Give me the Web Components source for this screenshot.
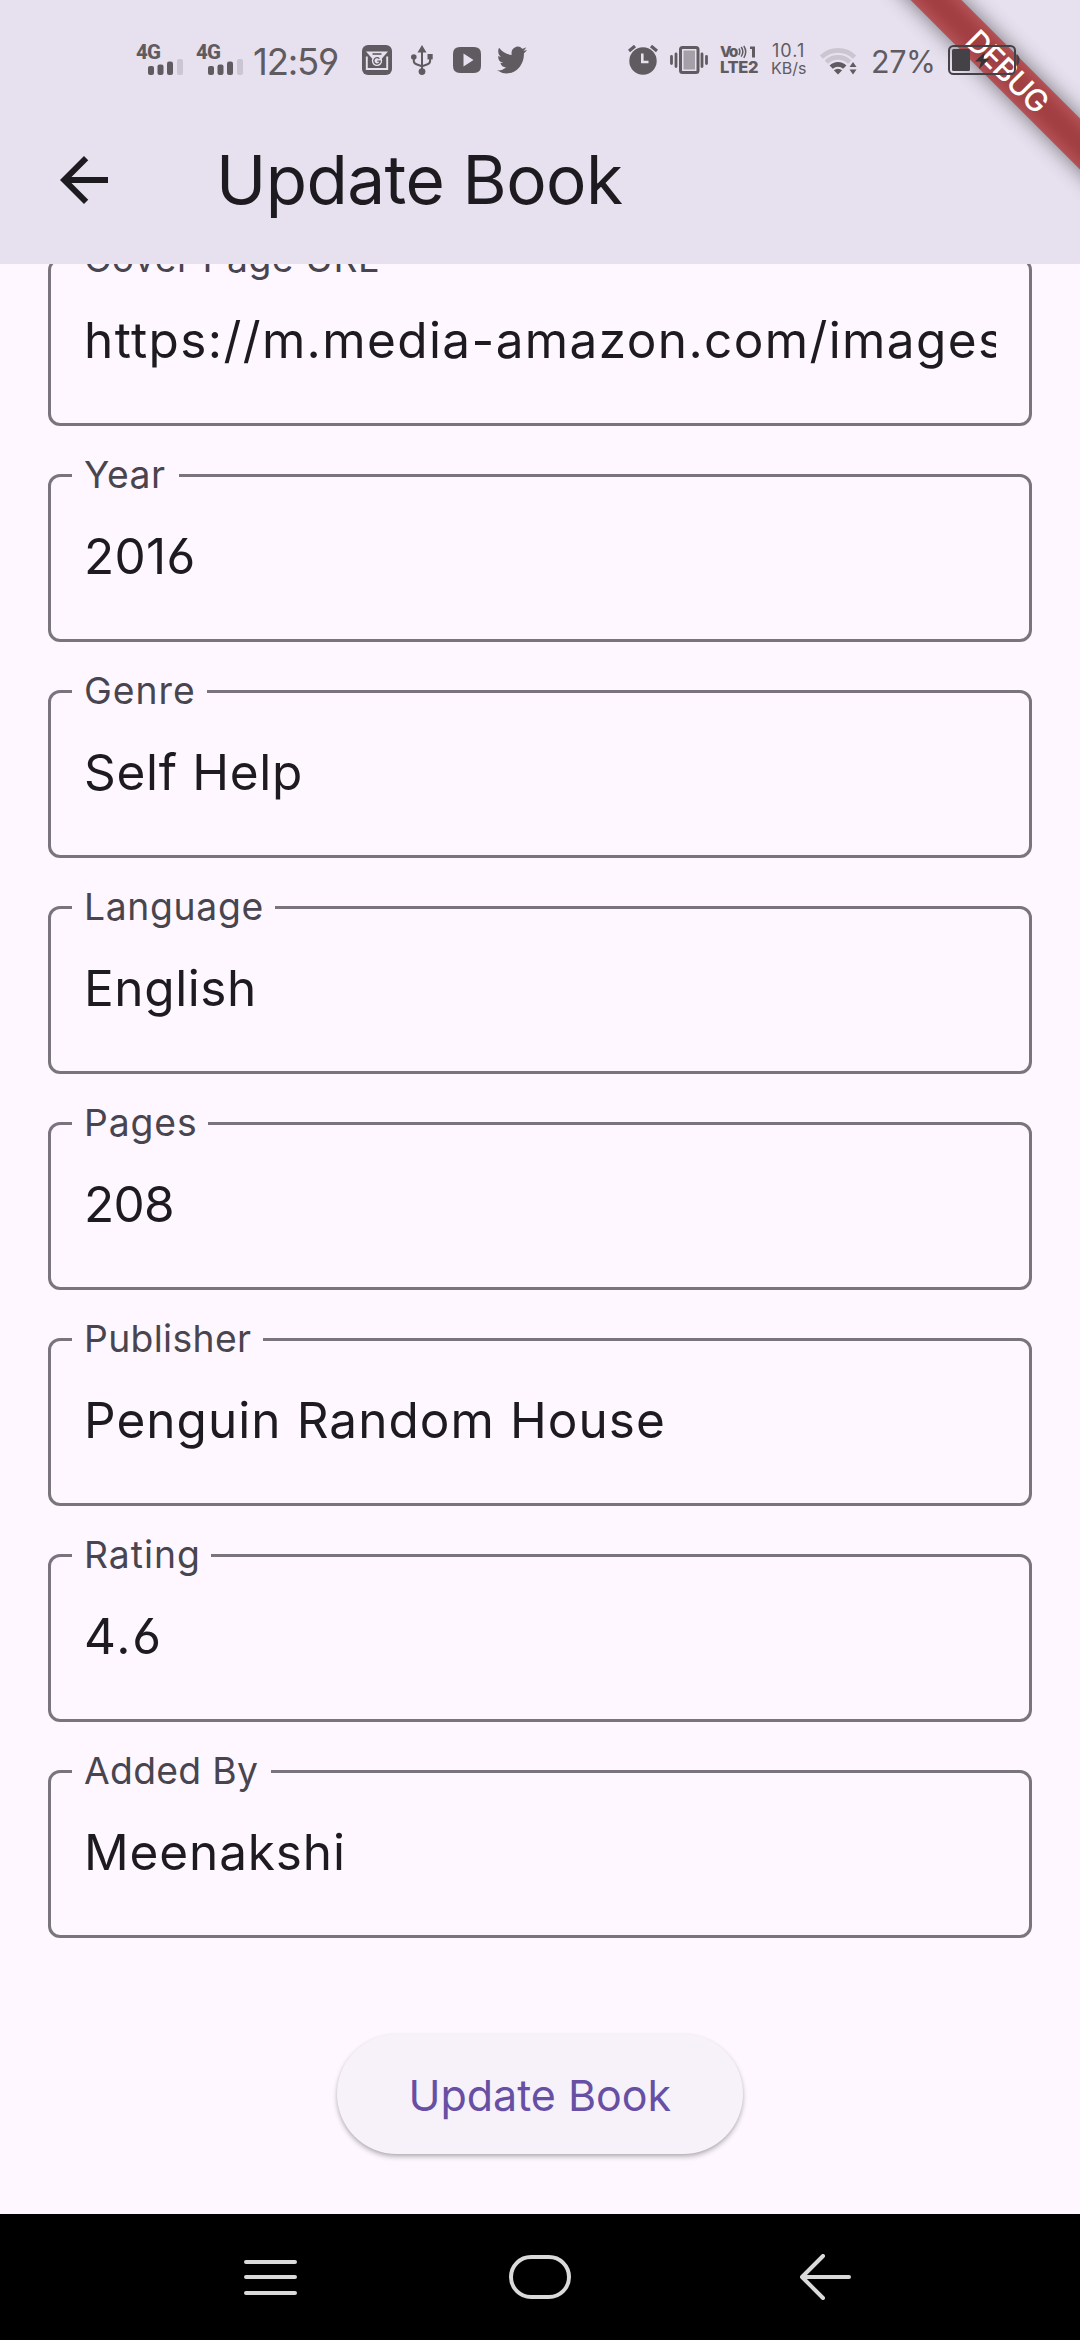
<!DOCTYPE html>
<html lang="en">
<head>
<meta charset="utf-8">
<title>Update Book</title>
<style>
  html, body { margin: 0; padding: 0; background: #fef7ff; }
  body { font-family: Inter, "Liberation Sans", sans-serif; color: #1d1b20; }
</style>
</head>
<body>
<book-app></book-app>
<script>
const define = (name, html, setup) => {
  const template = document.createElement('template');
  template.innerHTML = html;
  customElements.define(name, class extends HTMLElement {
    connectedCallback() {
      if (this.shadowRoot) return;
      this.attachShadow({ mode: 'open' }).append(template.content.cloneNode(true));
      if (setup) setup(this, this.shadowRoot);
    }
  });
};

/* Spaces its letters so that the painted text is `w` pixels wide. With `flush`, the ink starts at the left edge of the box. */
define('fit-text', `<style>
  :host { display: block; white-space: pre; }
  span { display: inline-block; font-feature-settings: "cv03", "cv04"; }
</style><span></span>`, (host, root) => {
  const span = root.querySelector('span');
  const text = host.getAttribute('text');
  span.textContent = text;
  const style = getComputedStyle(host);
  const ctx = document.createElement('canvas').getContext('2d');
  ctx.font = style.fontWeight + ' ' + style.fontSize + ' ' + style.fontFamily;
  const m = ctx.measureText(text);
  const w = Number(host.getAttribute('w'));
  const ink = m.actualBoundingBoxRight + m.actualBoundingBoxLeft;
  span.style.letterSpacing = ((w - ink) / Math.max(1, text.length - 1)).toFixed(3) + 'px';
  if (host.hasAttribute('flush')) {
    host.style.width = w + 'px';
    span.style.marginLeft = m.actualBoundingBoxLeft + 'px';
  }
});

define('signal-meter', `<style>
  :host { display: flex; flex-direction: column; width: 48px; height: 30px; }
  fit-text { font-family: Roboto, sans-serif; font-size: 20.5px; font-weight: 800; line-height: 14px; height: 14px; }
  svg { display: block; margin-left: 12px; }
</style>
<fit-text text="4G" w="24" flush></fit-text>
<svg width="36" height="16" viewBox="0 0 36 16">
  <rect x="0" y="7" width="6" height="9" rx="2" fill="#5f5b61"/>
  <rect x="9.5" y="5.5" width="6" height="10.5" rx="2" fill="#5f5b61"/>
  <rect x="19" y="2.5" width="6" height="13.5" rx="2" fill="#5f5b61"/>
  <rect x="29" y="0" width="6" height="16" rx="2" fill="#cbc5d1"/>
</svg>`);

define('status-bar', `<style>
  :host { display: flex; position: relative; z-index: 1; box-sizing: border-box; height: 96px; padding: 24px 0 0 136px; align-items: center; color: #5f5b61; }
  svg { display: block; flex: none; fill: #5f5b61; }
  fit-text, signal-meter { flex: none; }
  .time { font-size: 36.5px; font-weight: 400; line-height: 44px; margin: 4px 0 0 10px; }
  .stack { display: flex; flex-direction: column; flex: none; }
  .lte { margin-left: 12px; gap: 1px; font-weight: 800; }
  .lte .row { display: flex; align-items: center; height: 14px; }
  .rate { margin-left: 14px; }
  .pct { font-size: 30.5px; font-weight: 400; line-height: 36px; margin: 3px 0 0 16px; }
</style>
<signal-meter></signal-meter>
<signal-meter style="margin-left:12px"></signal-meter>
<fit-text class="time" text="12:59" w="85" flush></fit-text>

<svg style="margin-left:23px" width="30" height="30" viewBox="0 0 30 30">
  <rect width="30" height="30" rx="6"/>
  <path d="M4 6.5H26L19 14.5H11Z" fill="#e7e1ef"/>
  <path d="M4.8 11.5V24H25.2V11.5" fill="none" stroke="#e7e1ef" stroke-width="1.9"/>
  <path d="M10.5 9H19.5" stroke="#5f5b61" stroke-width="1.6"/>
  <circle cx="15" cy="15.8" r="5.2" fill="#e7e1ef"/>
  <path d="M17.4 13.7A3.2 3.2 0 1 0 18.2 16.2H15.2" fill="none" stroke="#5f5b61" stroke-width="1.3"/>
</svg>
<svg style="margin-left:19px" width="22" height="30" viewBox="0 0 22 30">
  <path d="M11 0L15.5 7.5H6.5Z"/>
  <circle cx="11" cy="26.6" r="3.4"/>
  <circle cx="2.8" cy="12" r="2.8"/>
  <rect x="16.5" y="9" width="5.2" height="5.4"/>
  <path d="M11 6V26M2.8 12V16Q2.8 18.5 6 19.5L11 21.3M19.1 13V16Q19.1 18.5 16 19.5L11 21.3" fill="none" stroke="#5f5b61" stroke-width="2"/>
</svg>
<svg style="margin-left:20px" width="28" height="26" viewBox="0 0 28 26">
  <path fill-rule="evenodd" d="M7 0H21Q28 0 28 7V19Q28 26 21 26H7Q0 26 0 19V7Q0 0 7 0ZM10.5 6.5V19.5L20.5 13Z"/>
</svg>
<svg style="margin-left:16px" width="30" height="28" viewBox="0 1.8 24 20.4" preserveAspectRatio="none">
  <path d="M23.953 4.57a10 10 0 01-2.825.775 4.958 4.958 0 002.163-2.723c-.951.555-2.005.959-3.127 1.184a4.92 4.92 0 00-8.384 4.482C7.69 8.095 4.067 6.13 1.64 3.162a4.822 4.822 0 00-.666 2.475c0 1.71.87 3.213 2.188 4.096a4.904 4.904 0 01-2.228-.616v.06a4.923 4.923 0 003.946 4.827 4.996 4.996 0 01-2.212.085 4.936 4.936 0 004.604 3.417 9.867 9.867 0 01-6.102 2.105c-.39 0-.779-.023-1.17-.067a13.995 13.995 0 007.557 2.209c9.053 0 13.998-7.496 13.998-13.985 0-.21 0-.42-.015-.63A9.935 9.935 0 0024 4.59z"/>
</svg>

<svg style="margin-left:101px" width="30" height="30" viewBox="0 0 30 30">
  <circle cx="15" cy="16" r="13.7"/>
  <path d="M1 6L7 1M29 6L23 1" stroke="#5f5b61" stroke-width="3.2"/>
  <path d="M14.3 8.5V17H20.5" fill="none" stroke="#e7e1ef" stroke-width="2.6"/>
</svg>
<svg style="margin-left:12px" width="38" height="28" viewBox="0 0 38 28">
  <rect x="10.5" y="1.5" width="17.5" height="25" rx="2" fill="#e7e1ef" stroke="#5f5b61" stroke-width="3"/>
  <rect x="13.5" y="4.5" width="11.5" height="19" fill="#a49fa8"/>
  <path d="M1.5 10.5V17.5M6 8V20.5M32 8V20.5M36.5 10.5V17.5" stroke="#5f5b61" stroke-width="2.8" stroke-linecap="round"/>
</svg>
<div class="stack lte">
  <div class="row">
    <fit-text text="Vo" w="18" flush style="font-size:15px;line-height:14px"></fit-text>
    <svg width="20" height="14" viewBox="0 0 20 14">
      <path d="M.8 3.5Q3 6.5 .8 10M3.2 2Q6.4 6.5 3.2 11.6M5.8 1Q9.6 6.5 5.8 12.8" fill="none" stroke="#5f5b61" stroke-width="1.5"/>
      <path d="M12 1.5H17V12.5H14V4H12Z"/>
    </svg>
  </div>
  <fit-text text="LTE2" w="38" flush style="font-size:16.5px;line-height:15px"></fit-text>
</div>
<div class="stack rate">
  <fit-text text="10.1" w="31" flush style="font-size:18px;line-height:16px"></fit-text>
  <fit-text text="KB/s" w="34" flush style="font-size:16px;line-height:18px"></fit-text>
</div>
<svg style="margin-left:14px" width="37" height="29" viewBox="0 0 37 29">
  <g fill="none" stroke-width="4.6">
    <path d="M1.4 11.2A23.6 23.6 0 0 1 34.6 11.2" stroke="#cbc5d1"/>
    <path d="M6.3 16.2A16.6 16.6 0 0 1 29.7 16.2" stroke="#cbc5d1"/>
    <path d="M11.2 21.2A9.6 9.6 0 0 1 24.8 21.2" stroke="#5f5b61"/>
  </g>
  <path d="M18 28.5L13.8 24.3Q18 21.3 22.2 24.3Z"/>
  <path d="M29.5 21L33 16L36.5 21ZM29.5 23.5L33 28.5L36.5 23.5Z"/>
</svg>
<fit-text class="pct" text="27%" w="60" flush></fit-text>
<svg style="margin-left:15px" width="72" height="30" viewBox="0 0 72 30">
  <rect x="1" y="1" width="66" height="28" rx="4.5" fill="none" stroke="#444246" stroke-width="2"/>
  <rect x="4" y="4" width="18" height="22" rx="1.5" fill="#444246"/>
  <path d="M37 7L27 16.5H33L31 24L41.5 13.8H35.5Z" fill="#353337"/>
  <path d="M68.5 9Q71.5 10.5 71.5 15T68.5 21Z" fill="#444246"/>
</svg>`);

define('debug-ribbon', `<style>
  :host { display: block; position: absolute; left: 858px; top: 54px; width: 300px; height: 36px; transform: rotate(45deg); }
  .shade { position: absolute; inset: 0; background: rgba(0,0,0,.5); filter: blur(10.5px); }
  .band { position: absolute; inset: 0; display: flex; align-items: center; justify-content: center; background: rgba(183,28,28,.627); color: #fff; font-size: 30.6px; font-weight: 500; line-height: 36px; }
</style>
<div class="shade"></div>
<div class="band"><fit-text text="DEBUG" w="100" flush></fit-text></div>`);

define('app-header', `<style>
  :host { display: block; position: relative; overflow: hidden; height: 264px; background: #e7e1ef; }
  .bar { display: flex; align-items: center; height: 168px; padding-left: 48px; box-sizing: border-box; }
  svg { display: block; fill: #1d1b20; }
  fit-text { font-size: 67.5px; line-height: 80px; font-weight: 380; margin: -1px 0 0 101px; }
</style>
<debug-ribbon></debug-ribbon>
<status-bar></status-bar>
<div class="bar">
  <svg width="72" height="72" viewBox="0 0 24 24"><path d="M20 11H7.83l5.59-5.59L12 4l-8 8 8 8 1.41-1.41L7.83 13H20z"/></svg>
  <fit-text text="Update Book" w="402" flush></fit-text>
</div>`);

define('outlined-field', `<style>
  :host { display: block; }
  fieldset { box-sizing: border-box; margin: 0; padding: 0 33px; height: 188px; min-width: 0; border: 3px solid #79747e; border-radius: 12px; }
  legend { box-sizing: border-box; margin-left: -12px; padding: 0 12px; height: 43px; color: #49454f; font-size: 37.3px; font-weight: 380; line-height: 41px; }
  .value { overflow: hidden; padding-top: 30px; font-size: 49.5px; font-weight: 380; line-height: 58px; height: 64px; }
</style>
<fieldset><legend></legend><div class="value"></div></fieldset>`, (host, root) => {
  const make = (text, w) => {
    const el = document.createElement('fit-text');
    el.setAttribute('text', text);
    el.setAttribute('w', w);
    return el;
  };
  const legend = root.querySelector('legend');
  legend.style.width = host.getAttribute('notch') + 'px';
  legend.append(make(host.getAttribute('label'), host.getAttribute('lw')));
  root.querySelector('.value').append(make(host.getAttribute('value'), host.getAttribute('vw')));
});

define('raised-button', `<style>
  :host { display: flex; align-items: center; justify-content: center; width: 406px; height: 120px; border-radius: 60px; background: #f7f2fa; color: #6750a4; font-size: 43px; font-weight: 380; line-height: 52px; box-shadow: 0 3px 5px rgba(0,0,0,.25), 0 1px 3px rgba(0,0,0,.08); }
  fit-text { margin: 2px 0 0 2px; }
</style><fit-text text="Update Book" w="259" flush></fit-text>`);

define('book-form', `<style>
  :host { display: flex; flex-direction: column; flex: 1; min-height: 0; overflow: hidden; background: #fef7ff; }
  .fields { display: flex; flex-direction: column; gap: 28px; margin-top: -26px; padding: 0 48px; }
  raised-button { margin: 96px auto 0; }
</style>
<div class="fields">
  <outlined-field label="Cover Page URL" lw="292" notch="320" value="https://m.media-amazon.com/images" vw="915"></outlined-field>
  <outlined-field label="Year" lw="81" notch="107" value="2016" vw="107.5"></outlined-field>
  <outlined-field label="Genre" lw="107" notch="135" value="Self Help" vw="214"></outlined-field>
  <outlined-field label="Language" lw="174.5" notch="203" value="English" vw="165"></outlined-field>
  <outlined-field label="Pages" lw="108" notch="136" value="208" vw="85"></outlined-field>
  <outlined-field label="Publisher" lw="164" notch="191" value="Penguin Random House" vw="575"></outlined-field>
  <outlined-field label="Rating" lw="110" notch="139" value="4.6" vw="73"></outlined-field>
  <outlined-field label="Added By" lw="173" notch="198.5" value="Meenakshi" vw="255"></outlined-field>
</div>
<raised-button></raised-button>`);

define('system-nav', `<style>
  :host { display: flex; align-items: center; height: 126px; padding-left: 244px; box-sizing: border-box; background: #000; }
  svg { display: block; fill: none; stroke: #dadada; stroke-width: 4; stroke-linecap: round; stroke-linejoin: round; }
</style>
<svg width="53" height="46" viewBox="0 0 53 46"><path d="M2 8H51M2 23H51M2 39H51"/></svg>
<svg style="margin-left:212px" width="62" height="46" viewBox="0 0 62 46"><rect x="2" y="3" width="58" height="40" rx="20"/></svg>
<svg style="margin-left:229px" width="52" height="46" viewBox="0 0 52 46"><path d="M2 23H49M23 2L2 23L23 44"/></svg>`);

define('book-app', `<style>
  :host { display: flex; flex-direction: column; width: 1080px; height: 2340px; overflow: hidden; }
  app-header, system-nav { flex: none; }
</style>
<app-header></app-header>
<book-form></book-form>
<system-nav></system-nav>`);
</script>
</body>
</html>
